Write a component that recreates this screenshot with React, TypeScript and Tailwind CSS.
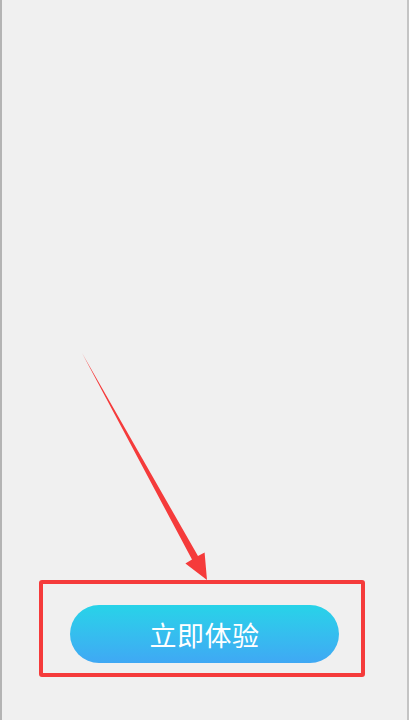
import React from 'react';

export default function App() {
  return (
    <div
      className="relative h-[720px] w-[409px] overflow-hidden bg-[#f0f0f0] flex flex-col justify-end"
      style={{ fontFamily: '"Noto Sans CJK SC", "Noto Sans", sans-serif' }}
    >
      {/* window edges */}
      <div className="absolute left-0 top-0 h-full w-[2px] bg-[#b4b4b4]" />
      <div className="absolute right-0 top-0 h-full w-[2px] bg-[#c4c4c4]" />

      {/* annotation arrow */}
      <svg className="absolute left-0 top-0" width="409" height="720" viewBox="0 0 409 720">
        <polygon
          points="82,353 198,556 204.6,552.5 207,580 185.4,563.5 192,559.5"
          fill="#f53b3b"
        />
      </svg>

      {/* highlighted button area */}
      <div className="ml-[39px] mb-[43px] w-[326px] h-[97px] border-[4px] border-[#f53b3b] rounded-[3px] pl-[27px] pt-[21px]">
        <button className="w-[269px] h-[58px] rounded-full bg-gradient-to-b from-[#27d3e8] to-[#3fa8f4] text-white text-[27px] leading-none flex items-center justify-center tracking-[0.5px]">
          立即体验
        </button>
      </div>
    </div>
  );
}
